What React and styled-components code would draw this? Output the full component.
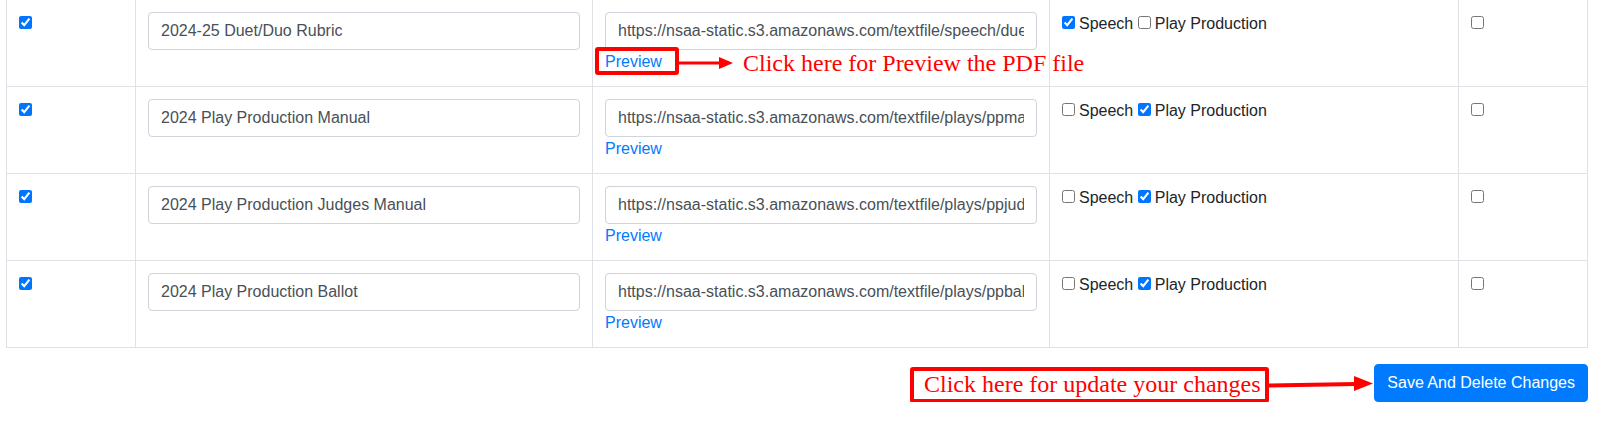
import React from "react";
import styled, { createGlobalStyle } from "styled-components";

const GlobalStyle = createGlobalStyle`
  *, *::before, *::after { box-sizing: border-box; }
  html, body { margin: 0; padding: 0; background: #fff; }
  body {
    font-family: "Liberation Sans", Arial, sans-serif;
    font-size: 16px;
    line-height: 1.5;
    color: #212529;
  }
`;

const Page = styled.div`
  position: relative;
  width: 1603px;
  padding: 0 15px 0 6px;
`;

const Table = styled.table`
  width: 100%;
  table-layout: fixed;
  border-collapse: separate;
  border-spacing: 0;
`;

const Cell = styled.td`
  vertical-align: top;
  padding: 12px;
  border-left: 1px solid #dee2e6;
  border-top: 1px solid #dee2e6;
  tr:first-child > & { border-top: 0; }
  tr:last-child > & { border-bottom: 1px solid #dee2e6; }
  &:last-child { border-right: 1px solid #dee2e6; }
`;

const TextInput = styled.input`
  display: block;
  width: 100%;
  height: 38px;
  padding: 6px 12px;
  font: 16px/1.5 "Liberation Sans", Arial, sans-serif;
  color: #495057;
  background: #fff;
  border: 1px solid #ced4da;
  border-radius: 4px;
  outline: none;
`;

const PreviewLink = styled.a`
  display: inline-block;
  color: #007bff;
  text-decoration: none;
  cursor: pointer;
`;

const Check = styled.input.attrs({ type: "checkbox" })`
  width: 13px;
  height: 13px;
  margin: 0 ${(p) => (p.$tight ? 0 : 4)}px 0 0;
  vertical-align: baseline;
`;

const Footer = styled.div`
  display: flex;
  justify-content: flex-end;
  margin-top: 16px;
`;

const PrimaryButton = styled.button`
  background: #007bff;
  color: #fff;
  border: 1px solid #007bff;
  border-radius: 4px;
  padding: 6px 12px;
  font: 16px/1.5 "Liberation Sans", Arial, sans-serif;
  cursor: pointer;
`;

const Callout = styled.div`
  position: absolute;
  left: ${(p) => p.$x}px;
  top: ${(p) => p.$y}px;
  width: ${(p) => p.$w}px;
  height: ${(p) => p.$h}px;
  border: 4px solid #ff0000;
  border-radius: 3px;
  padding-left: 10px;
  font: 24px/26px "Liberation Serif", "Times New Roman", serif;
  color: #ff0000;
  white-space: nowrap;
  pointer-events: none;
`;

const Note = styled.div`
  position: absolute;
  left: ${(p) => p.$x}px;
  top: ${(p) => p.$y}px;
  font: 24px/26px "Liberation Serif", "Times New Roman", serif;
  color: #ff0000;
  white-space: nowrap;
  pointer-events: none;
`;

const ArrowLayer = styled.svg`
  position: absolute;
  left: 0;
  top: 0;
  pointer-events: none;
`;

const rows = [
  {
    title: "2024-25 Duet/Duo Rubric",
    url: "https://nsaa-static.s3.amazonaws.com/textfile/speech/duetduorubric.pdf",
    speech: true,
    play: false,
  },
  {
    title: "2024 Play Production Manual",
    url: "https://nsaa-static.s3.amazonaws.com/textfile/plays/ppmanual.pdf",
    speech: false,
    play: true,
  },
  {
    title: "2024 Play Production Judges Manual",
    url: "https://nsaa-static.s3.amazonaws.com/textfile/plays/ppjudgesmanual.pdf",
    speech: false,
    play: true,
  },
  {
    title: "2024 Play Production Ballot",
    url: "https://nsaa-static.s3.amazonaws.com/textfile/plays/ppballot.pdf",
    speech: false,
    play: true,
  },
];

export default function App() {
  return (
    <>
      <GlobalStyle />
      <Page>
        <Table>
          <colgroup>
            <col style={{ width: 129 }} />
            <col style={{ width: 457 }} />
            <col style={{ width: 457 }} />
            <col style={{ width: 409 }} />
            <col style={{ width: 130 }} />
          </colgroup>
          <tbody>
            {rows.map((r) => (
              <tr key={r.title}>
                <Cell>
                  <Check defaultChecked />
                </Cell>
                <Cell>
                  <TextInput type="text" defaultValue={r.title} />
                </Cell>
                <Cell>
                  <TextInput type="text" defaultValue={r.url} />
                  <PreviewLink>Preview</PreviewLink>
                </Cell>
                <Cell>
                  <Check defaultChecked={r.speech} />
                  Speech <Check defaultChecked={r.play} />
                  Play Production
                </Cell>
                <Cell>
                  <Check />
                </Cell>
              </tr>
            ))}
          </tbody>
        </Table>
        <Footer>
          <PrimaryButton type="button">Save And Delete Changes</PrimaryButton>
        </Footer>

        <Callout $x={595} $y={47} $w={84} $h={28} />
        <Note $x={743} $y={50}>Click here for Preview the PDF file</Note>
        <Callout $x={910} $y={367} $w={359} $h={36}>
          Click here for update your changes
        </Callout>
        <ArrowLayer width="1603" height="430" viewBox="0 0 1603 430">
          <line x1="679" y1="63" x2="721" y2="63" stroke="#ff0000" strokeWidth="3" />
          <polygon points="719,57 733,63 719,69" fill="#ff0000" />
          <line x1="1269" y1="385.5" x2="1356" y2="384" stroke="#ff0000" strokeWidth="4" />
          <polygon points="1354,376 1373,383.5 1354,391" fill="#ff0000" />
        </ArrowLayer>
      </Page>
    </>
  );
}
